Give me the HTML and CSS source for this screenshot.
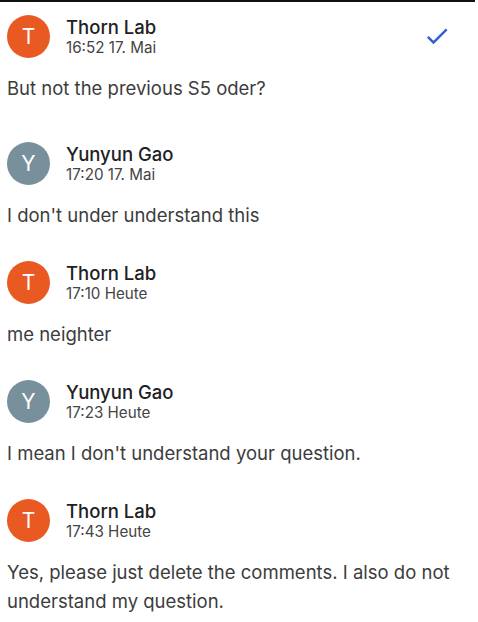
FILE: index.html
```html
<!DOCTYPE html>
<html>
<head>
<meta charset="utf-8">
<link rel="stylesheet" href="styles.css">
</head>
<body>
<div class="thread">
  <div class="comment comment-first">
    <div class="head">
      <div class="avatar avatar-t">T</div>
      <div class="meta">
        <div class="name">Thorn Lab</div>
        <div class="time">16:52 17. Mai</div>
      </div>
      <svg class="check" viewBox="0 0 24 24" width="28" height="28"><path d="M9 16.17L4.83 12l-1.42 1.41L9 19 21 7l-1.41-1.41z" fill="#2f5ed6"/></svg>
    </div>
    <div class="msg">But not the previous S5 oder?</div>
  </div>
  <div class="comment">
    <div class="head">
      <div class="avatar avatar-y">Y</div>
      <div class="meta">
        <div class="name">Yunyun Gao</div>
        <div class="time">17:20 17. Mai</div>
      </div>
    </div>
    <div class="msg">I don't under understand this</div>
  </div>
  <div class="comment">
    <div class="head">
      <div class="avatar avatar-t">T</div>
      <div class="meta">
        <div class="name">Thorn Lab</div>
        <div class="time">17:10 Heute</div>
      </div>
    </div>
    <div class="msg">me neighter</div>
  </div>
  <div class="comment">
    <div class="head">
      <div class="avatar avatar-y">Y</div>
      <div class="meta">
        <div class="name">Yunyun Gao</div>
        <div class="time">17:23 Heute</div>
      </div>
    </div>
    <div class="msg">I mean I don't understand your question.</div>
  </div>
  <div class="comment">
    <div class="head">
      <div class="avatar avatar-t">T</div>
      <div class="meta">
        <div class="name">Thorn Lab</div>
        <div class="time">17:43 Heute</div>
      </div>
    </div>
    <div class="msg">Yes, please just delete the comments. I also do not understand my question.</div>
  </div>
</div>
</body>
</html>
```
FILE: styles.css
```css
html, body {
  margin: 0;
  padding: 0;
  background: #ffffff;
}
body {
  font-family: Inter, "Noto Sans", sans-serif;
  width: 478px;
  height: 622px;
  overflow: hidden;
}
.thread {
  border-top: 2px solid #111111;
  width: 475px;
  padding: 13px 0 0 7px;
  box-sizing: border-box;
}
.comment {
  display: flex;
  flex-direction: column;
  padding-bottom: 31px;
}
.comment-first {
  padding-bottom: 39px;
}
.head {
  display: flex;
  align-items: center;
  gap: 16px;
  height: 43px;
}
.avatar {
  width: 43px;
  height: 43px;
  border-radius: 50%;
  color: #ffffff;
  display: flex;
  align-items: center;
  justify-content: center;
  font-size: 21px;
  flex-shrink: 0;
}
.avatar-t { background: #e95a23; }
.avatar-y { background: #78909c; }
.meta {
  display: flex;
  flex-direction: column;
  flex: 1;
}
.name {
  font-size: 18.5px;
  font-weight: 500;
  color: #202124;
  line-height: 21px;
}
.time {
  font-size: 15.2px;
  color: #444444;
  line-height: 19px;
}
.check {
  margin-right: 24px;
  margin-top: -2px;
}
.msg {
  margin-top: 16px;
  font-size: 18.5px;
  line-height: 29px;
  color: #3c3c3c;
  padding-right: 10px;
}
```
